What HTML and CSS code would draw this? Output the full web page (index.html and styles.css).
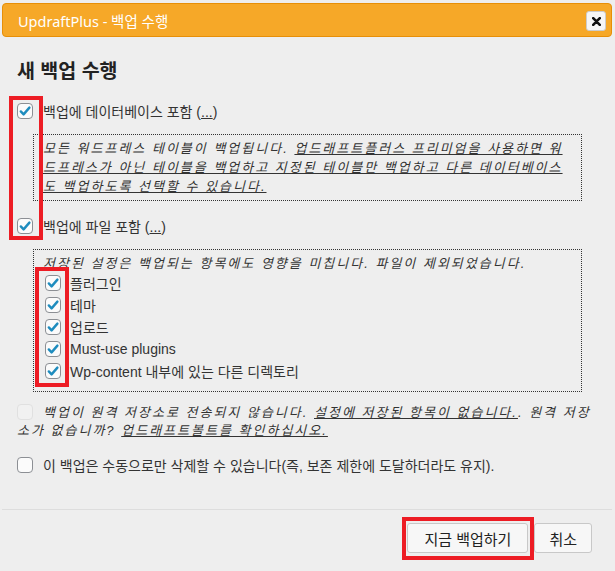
FILE: index.html
```html
<!DOCTYPE html>
<html lang="ko">
<head>
  <meta charset="UTF-8">
  <title>UpdraftPlus - 백업 수행</title>
  <link rel="stylesheet" href="styles.css">
</head>
<body>
  <div class="dialog">
    <div class="titlebar">
      <span class="title">UpdraftPlus - 백업 수행</span>
      <span class="close">
        <svg width="9" height="9" viewBox="0 0 9 9"><path d="M1.2 1.2 L7.8 7.8 M7.8 1.2 L1.2 7.8" stroke="#111" stroke-width="2.6" stroke-linecap="round"/></svg>
      </span>
    </div>

    <div class="content">
      <h2 class="heading">새 백업 수행</h2>

      <div class="option first">
        <span class="cb"><svg width="14" height="14" viewBox="0 0 14 14"><path d="M2.8 7.4 L5.6 10.4 L11.4 3.6" fill="none" stroke="#1e8cbe" stroke-width="2.4" stroke-linecap="round" stroke-linejoin="round"/></svg></span>
        <span>백업에 데이터베이스 포함 (<u>...</u>)</span>
      </div>

      <div class="note db ital">
        모든 워드프레스 테이블이 백업됩니다. <u>업드래프트플러스 프리미엄을 사용하면 워드프레스가 아닌 테이블을 백업하고 지정된 테이블만 백업하고 다른 데이터베이스도 백업하도록 선택할 수 있습니다.</u>
      </div>

      <div class="option">
        <span class="cb"><svg width="14" height="14" viewBox="0 0 14 14"><path d="M2.8 7.4 L5.6 10.4 L11.4 3.6" fill="none" stroke="#1e8cbe" stroke-width="2.4" stroke-linecap="round" stroke-linejoin="round"/></svg></span>
        <span>백업에 파일 포함 (<u>...</u>)</span>
      </div>

      <div class="note files">
        <div class="ital files-info">저장된 설정은 백업되는 항목에도 영향을 미칩니다. 파일이 제외되었습니다.</div>
        <div class="item">
          <span class="cb"><svg width="14" height="14" viewBox="0 0 14 14"><path d="M2.8 7.4 L5.6 10.4 L11.4 3.6" fill="none" stroke="#1e8cbe" stroke-width="2.4" stroke-linecap="round" stroke-linejoin="round"/></svg></span>
          <span>플러그인</span>
        </div>
        <div class="item">
          <span class="cb"><svg width="14" height="14" viewBox="0 0 14 14"><path d="M2.8 7.4 L5.6 10.4 L11.4 3.6" fill="none" stroke="#1e8cbe" stroke-width="2.4" stroke-linecap="round" stroke-linejoin="round"/></svg></span>
          <span>테마</span>
        </div>
        <div class="item">
          <span class="cb"><svg width="14" height="14" viewBox="0 0 14 14"><path d="M2.8 7.4 L5.6 10.4 L11.4 3.6" fill="none" stroke="#1e8cbe" stroke-width="2.4" stroke-linecap="round" stroke-linejoin="round"/></svg></span>
          <span>업로드</span>
        </div>
        <div class="item">
          <span class="cb"><svg width="14" height="14" viewBox="0 0 14 14"><path d="M2.8 7.4 L5.6 10.4 L11.4 3.6" fill="none" stroke="#1e8cbe" stroke-width="2.4" stroke-linecap="round" stroke-linejoin="round"/></svg></span>
          <span>Must-use plugins</span>
        </div>
        <div class="item">
          <span class="cb"><svg width="14" height="14" viewBox="0 0 14 14"><path d="M2.8 7.4 L5.6 10.4 L11.4 3.6" fill="none" stroke="#1e8cbe" stroke-width="2.4" stroke-linecap="round" stroke-linejoin="round"/></svg></span>
          <span>Wp-content 내부에 있는 다른 디렉토리</span>
        </div>
      </div>

      <p class="remote ital"><span class="cb disabled inline"></span>백업이 원격 저장소로 전송되지 않습니다. <u>설정에 저장된 항목이 없습니다.</u>. 원격 저장소가 없습니까? <u>업드래프트볼트를 확인하십시오.</u></p>

      <div class="option keep">
        <span class="cb"></span>
        <span>이 백업은 수동으로만 삭제할 수 있습니다(즉, 보존 제한에 도달하더라도 유지).</span>
      </div>
    </div>

    <div class="footer">
      <button class="btn">지금 백업하기</button>
      <button class="btn cancel">취소</button>
    </div>
  </div>

  <!-- 강조 표시 -->
  <div class="mark mark-db"></div>
  <div class="mark mark-files"></div>
  <div class="mark mark-btn"></div>
</body>
</html>
```

FILE: styles.css
```css
body {
  margin: 0;
  background-color: #eeeeee;
  font-family: "Liberation Sans", "Noto Sans CJK KR", sans-serif;
  font-size: 14px;
  color: #333;
}

.dialog {
  padding: 3px 3px 0 2px;
}

.titlebar {
  height: 32px;
  display: flex;
  align-items: center;
  justify-content: space-between;
  padding: 0 5px 0 15px;
  background-color: #f6a828;
  border: 1px solid #e78f08;
  border-radius: 4px;
  color: #fff;
  font-family: "Noto Sans", "Noto Sans CJK KR", sans-serif;
  font-size: 14.5px;
}

.close {
  width: 18px;
  height: 18px;
  display: flex;
  align-items: center;
  justify-content: center;
  background-color: #f6f6f6;
  border: 1px solid #cccccc;
  border-radius: 3px;
  margin-top: 2px;
}

.content {
  padding: 0 18px 0 15px;
}

.heading {
  margin: 22px 0 0;
  font-size: 19.5px;
  line-height: 24px;
  font-weight: bold;
  color: #222;
}

.option {
  display: flex;
  align-items: center;
  height: 22px;
  margin-top: 14px;
}

.option.first {
  margin-top: 17px;
}

.option .cb {
  margin-right: 10px;
}

.cb {
  width: 16px;
  height: 16px;
  box-sizing: border-box;
  flex: none;
  display: inline-flex;
  align-items: center;
  justify-content: center;
  background-color: #fbfbfb;
  border: 1px solid #8c8f94;
  border-radius: 4px;
}

.cb.disabled {
  background-color: #f1f1f1;
  border-color: #e0e0e0;
}

.cb.inline {
  vertical-align: -3px;
  margin: 0 10px 0 0;
}

.ital {
  font-style: italic;
  font-size: 13px;
  letter-spacing: 2px;
}

.note {
  margin: 12px 12px 0 16px;
  border: 1px dotted #333;
}

.note.db {
  padding: 4px 9px;
  line-height: 19px;
}

.note.files {
  padding: 5px 9px 9px;
}

.files-info {
  line-height: 17px;
}

.item {
  display: flex;
  align-items: center;
  height: 22px;
}

.item .cb {
  margin: 0 9px 0 2px;
}

.remote {
  margin: 12px 0 0;
  line-height: 18px;
}

.footer {
  margin-top: 33px;
  border-top: 1px solid #dddddd;
  padding: 13px 20px 0 0;
  display: flex;
  justify-content: flex-end;
  gap: 6px;
}

.btn {
  height: 30px;
  padding: 0 16px;
  font-family: "Liberation Sans", "Noto Sans CJK KR", sans-serif;
  font-size: 15px;
  color: #222;
  background-color: #f7f7f7;
  border: 1px solid #c8c8c8;
  border-radius: 3px;
}

.btn.cancel {
  padding: 0 14px;
}

.mark {
  position: absolute;
  box-sizing: border-box;
  border: 4px solid #ed1c24;
}

.mark-db {
  left: 9px;
  top: 96px;
  width: 34px;
  height: 144px;
}

.mark-files {
  left: 35px;
  top: 267px;
  width: 34px;
  height: 120px;
}

.mark-btn {
  left: 402px;
  top: 517px;
  width: 132px;
  height: 43px;
}
```
